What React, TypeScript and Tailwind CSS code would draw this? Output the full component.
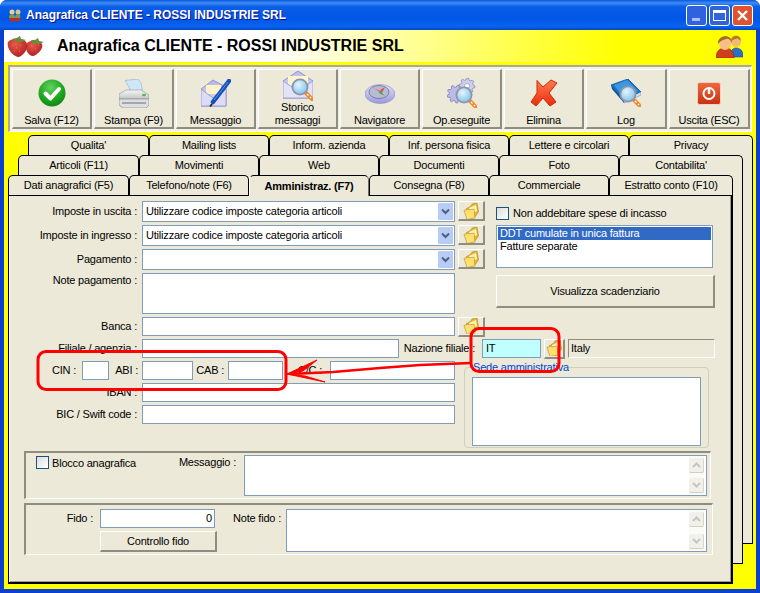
import type { ReactNode } from 'react'

const ROW_3 = ["Qualita'", 'Mailing lists', 'Inform. azienda', 'Inf. persona fisica', 'Lettere e circolari', 'Privacy']
const ROW_2 = ['Articoli (F11)', 'Movimenti', 'Web', 'Documenti', 'Foto', "Contabilita'"]
const ROW_1 = ['Dati anagrafici (F5)', 'Telefono/note (F6)', 'Amministraz. (F7)', 'Consegna (F8)', 'Commerciale', 'Estratto conto (F10)']

function Magnifier({ x = 0, y = 0, id }: { x?: number; y?: number; id: string }) {
  return (
    <g transform={`translate(${x} ${y})`}>
      <defs>
        <radialGradient id={id} cx="0.4" cy="0.35" r="0.7">
          <stop offset="0" stopColor="#e4f6ff" />
          <stop offset="1" stopColor="#7cc0ea" />
        </radialGradient>
      </defs>
      <path d="M19 19l7 7" stroke="#f08a30" strokeWidth="4" strokeLinecap="round" />
      <path d="M21 21l1.500 1.500M24 24l1 1" stroke="#fff" strokeWidth="1.200" />
      <circle cx="14" cy="14" r="7.600" fill={`url(#${id})`} stroke="#8d96a8" strokeWidth="1.800" />
    </g>
  )
}

function gearPath(cx: number, cy: number, r: number, teeth: number) {
  const pts: string[] = []
  for (let i = 0; i < teeth * 4; i++) {
    const a = (i / (teeth * 4)) * Math.PI * 2
    const rad = i % 4 < 2 ? r : r * 0.76
    pts.push(`${(cx + Math.cos(a) * rad).toFixed(1)} ${(cy + Math.sin(a) * rad).toFixed(1)}`)
  }
  return `M${pts.join('L')}Z`
}

function CheckIcon() {
  return (
    <svg width="28" height="28" viewBox="0 0 28 28">
      <defs>
        <radialGradient id="chk" cx="0.45" cy="0.3" r="0.8">
          <stop offset="0" stopColor="#5fd35f" />
          <stop offset="0.6" stopColor="#1ca31c" />
          <stop offset="1" stopColor="#0b7a16" />
        </radialGradient>
      </defs>
      <circle cx="14" cy="14" r="13.500" fill="url(#chk)" />
      <path d="M7.500 14.500l5 5L21 10" fill="none" stroke="#fff" strokeWidth="4" strokeLinecap="round" strokeLinejoin="round" />
    </svg>
  )
}

function PrinterIcon() {
  return (
    <svg width="30" height="29" viewBox="0 0 30 29">
      <defs>
        <linearGradient id="prt" x1="0" y1="0" x2="0" y2="1">
          <stop offset="0" stopColor="#f6f6f6" />
          <stop offset="1" stopColor="#c2c5c8" />
        </linearGradient>
      </defs>
      <path d="M6 1.500L19 0l3 4 2 10H12L10 8z" fill="#cfe6fa" stroke="#9ab8d2" strokeWidth="0.700" />
      <path d="M0 15l7-4h15l8 5v4H0z" fill="url(#prt)" stroke="#9a9ea2" strokeWidth="0.700" />
      <path d="M0 20h30v6l-3 3H4l-4-3z" fill="#dcdedf" stroke="#8d9195" strokeWidth="0.700" />
      <path d="M3 24h24" stroke="#6f7377" strokeWidth="1.200" />
      <ellipse cx="25" cy="16" rx="2" ry="1.200" fill="#58b948" />
    </svg>
  )
}

function MailPenIcon() {
  return (
    <svg width="30" height="28" viewBox="0 0 30 28">
      <defs>
        <linearGradient id="mp" x1="0" y1="0" x2="0" y2="1">
          <stop offset="0" stopColor="#b4b6ea" />
          <stop offset="1" stopColor="#d9d9f6" />
        </linearGradient>
      </defs>
      <path d="M0 10L12 1l13 7v19H0z" fill="url(#mp)" stroke="#8586c6" strokeWidth="0.800" />
      <rect x="5" y="6" width="15" height="9" fill="#fff2c8" />
      <path d="M0 10l12 9 13-9v17H0z" fill="#dcdcf7" stroke="#8d8ecd" strokeWidth="0.800" />
      <path d="M28 2L12 23" stroke="#1450b8" strokeWidth="4.500" strokeLinecap="round" />
      <path d="M27 3L13 21" stroke="#5b95e8" strokeWidth="1" />
      <path d="M11 25l-2 2.500" stroke="#25282e" strokeWidth="2" />
    </svg>
  )
}

function MailSearchIcon() {
  return (
    <svg width="30" height="30" viewBox="0 0 30 30">
      <defs>
        <linearGradient id="ms" x1="0" y1="0" x2="0" y2="1">
          <stop offset="0" stopColor="#b8baec" />
          <stop offset="1" stopColor="#e2e2f9" />
        </linearGradient>
      </defs>
      <path d="M0 10L15 0l15 10v17H0z" fill="url(#ms)" stroke="#8586c6" strokeWidth="0.800" />
      <rect x="5" y="5" width="20" height="10" fill="#fff4d2" />
      <path d="M0 10l15 10 15-10v17H0z" fill="#e2e2f8" stroke="#9091cf" strokeWidth="0.800" />
      <Magnifier x={3} y={2} id="ms-lens" />
    </svg>
  )
}

function CompassIcon() {
  return (
    <svg width="30" height="21" viewBox="0 0 30 21">
      <defs>
        <linearGradient id="cp" x1="0" y1="0" x2="0" y2="1">
          <stop offset="0" stopColor="#e0e0f8" />
          <stop offset="1" stopColor="#9a9adc" />
        </linearGradient>
      </defs>
      <ellipse cx="15" cy="11" rx="15" ry="9.500" fill="url(#cp)" stroke="#8a8ac8" strokeWidth="0.600" />
      <ellipse cx="14" cy="9" rx="10" ry="6.500" fill="#b8bcd2" stroke="#6a6fa0" strokeWidth="0.800" />
      <path d="M8 5l7 3 2 2z" fill="#e23a2a" />
      <path d="M15 8l5 5-6-3z" fill="#3aa548" />
      <path d="M15 7l5-3-3 6z" fill="#d8584a" />
    </svg>
  )
}

function GearsIcon() {
  return (
    <svg width="30" height="30" viewBox="0 0 30 30">
      <path d={gearPath(20, 8, 8, 8)} fill="#cfcfec" stroke="#8586be" strokeWidth="0.800" />
      <circle cx="20" cy="8" r="2.500" fill="#fff" stroke="#8586be" strokeWidth="0.600" />
      <path d={gearPath(9, 16, 9, 9)} fill="#bcbce6" stroke="#7b7cb8" strokeWidth="0.800" />
      <Magnifier x={3} y={3} id="gear-lens" />
    </svg>
  )
}

function DeleteIcon() {
  return (
    <svg width="28" height="28" viewBox="0 0 28 28">
      <defs>
        <linearGradient id="del" x1="0" y1="0" x2="0" y2="1">
          <stop offset="0" stopColor="#ff7a50" />
          <stop offset="1" stopColor="#ec2c0c" />
        </linearGradient>
      </defs>
      <path
        d="M7 1.500l6 6.500 8-7 6 3-8 10 7 9-6 4-7-8-7 8-5-4 6-9z"
        fill="url(#del)"
        stroke="#c92a0a"
        strokeWidth="1"
        strokeLinejoin="round"
      />
    </svg>
  )
}

function BookIcon() {
  return (
    <svg width="30" height="28" viewBox="0 0 30 28">
      <path d="M0 6l17-6 13 13-17 8z" fill="#1c76c8" stroke="#0d4e98" strokeWidth="0.800" />
      <path d="M3 6l13-5 11 11-14 7z" fill="#3d96e0" />
      <path d="M0 6l13 15v3L1 10z" fill="#0e56a4" />
      <path d="M13 21l17-8v3l-17 8z" fill="#d8e4f0" stroke="#5b7ca0" strokeWidth="0.500" />
      <Magnifier x={3} y={1} id="book-lens" />
    </svg>
  )
}

function PowerIcon() {
  return (
    <svg width="24" height="23" viewBox="0 0 24 23">
      <defs>
        <linearGradient id="pw" x1="0" y1="0" x2="0" y2="1">
          <stop offset="0" stopColor="#ef6a40" />
          <stop offset="1" stopColor="#ca2f10" />
        </linearGradient>
      </defs>
      <rect x="0.500" y="0.500" width="23" height="22" rx="2" fill="url(#pw)" stroke="#f3d0c0" />
      <circle cx="12" cy="11.500" r="5.500" fill="none" stroke="#fff" strokeWidth="2" />
      <path d="M12 7v5" stroke="#fff" strokeWidth="2.400" />
    </svg>
  )
}

function Strawberries() {
  return (
    <svg width="37" height="21" viewBox="0 0 37 21">
      <defs>
        <radialGradient id="bry" cx="0.4" cy="0.3" r="0.8">
          <stop offset="0" stopColor="#e8584a" />
          <stop offset="1" stopColor="#a81c1c" />
        </radialGradient>
      </defs>
      <path d="M20 7c3-3 12-3 15 1 2 5-5 11-9 12-5 0-9-8-6-13z" fill="url(#bry)" />
      <path d="M1 6c3-4 14-5 18 0 4 5-2 13-7 15-6 0-13-9-11-15z" fill="url(#bry)" />
      <path d="M5 3l5-1 3-2 1 3 5 1-5 2-5 0z" fill="#6f8a3a" />
      <path d="M24 4l4 0 3-2 1 3 5 1-5 2-6 0z" fill="#6f8a3a" />
      <path d="M5 9h.5M9 12h.5M13 9h.5M7 15h.5M12 15h.5M24 10h.5M28 13h.5M31 9h.5" stroke="#f4b0a0" strokeWidth="1" />
    </svg>
  )
}

function UsersIcon() {
  return (
    <svg width="27" height="23" viewBox="0 0 27 23">
      <path d="M14 22c0-5 2-9 6-9s7 3 7 7v2z" fill="#2a70c8" stroke="#144a90" strokeWidth="0.600" />
      <circle cx="20" cy="7" r="5" fill="#f6b878" />
      <path d="M15 6c0-7 10-7 10 0-2-2-4-3-5-2-2 0-3 1-5 2z" fill="#b47a20" />
      <path d="M0 23c0-6 3-10 9-10s9 4 9 10z" fill="#d0401c" stroke="#8c2410" strokeWidth="0.600" />
      <ellipse cx="9" cy="8" rx="6" ry="7" fill="#f8c088" />
      <path d="M2 9C1 0 16-2 16 8c-2-4-4-5-6-4-3 1-6 2-8 5z" fill="#a86c18" />
    </svg>
  )
}

function TitleIcon() {
  return (
    <svg width="13" height="13" viewBox="0 0 13 13">
      <path d="M1 9l5-1 1 4-4 1zM7 9l5-1 1 3-5 2z" fill="#c82820" />
      <circle cx="4" cy="3" r="2.500" fill="#e8d098" />
      <circle cx="10" cy="3" r="2.500" fill="#d8c888" />
      <path d="M1 9c0-3 1-4 3-4s3 1 3 4zM7 9c0-3 1-4 3-4s3 1 2 4z" fill="#7a9a50" />
    </svg>
  )
}

function FolderIcon() {
  return (
    <svg width="16" height="16" viewBox="0 0 16 16">
      <path d="M3 6l5-3 1-2 5-1 1.500 9-4 5.500z" fill="#e8b830" stroke="#a8821c" strokeWidth="0.600" />
      <path d="M6 5l7-3 1 6-6 3z" fill="#fff3b4" />
      <path d="M1 7.500l4-1.500 1 1 5-1 1 9-8 1.500z" fill="#ffe070" stroke="#b08a20" strokeWidth="0.600" />
    </svg>
  )
}

function ToolButton({ icon, label, tall, wide }: { icon: ReactNode; label: string[]; tall?: boolean; wide?: boolean }) {
  return (
    <div
      className={`flex h-[60px] flex-col items-center border-t border-l border-t-white border-l-white border-r-2 border-b-2 border-r-[#8f8d80] border-b-[#8f8d80] bg-[#ece9d8] ${wide ? 'w-[81px]' : 'w-[80px]'}`}
    >
      <div className={`flex items-center justify-center ${tall ? 'h-[31px] pt-[1px]' : 'h-[44px] pt-[2px]'}`}>{icon}</div>
      <div className="text-center leading-[13px]">
        {label.map((l) => (
          <div key={l}>{l}</div>
        ))}
      </div>
    </div>
  )
}

function TabRow({ tabs, offset, active }: { tabs: string[]; offset: string; active?: number }) {
  return (
    <div className={`flex h-[20px] ${offset}`}>
      {tabs.map((t, i) => (
        <div
          key={t}
          className={`flex items-center justify-center rounded-t-[5px] border-t border-l border-r border-black ${i === 0 ? 'w-[121px]' : i === 5 ? 'w-[124px]' : 'w-[120px]'} ${active === i ? 'relative z-10 h-[21px] border-l-white border-r-[#716f64] bg-[#ece9d8] font-bold' : 'bg-[#ece9d8]'}`}
        >
          {t}
        </div>
      ))}
    </div>
  )
}

function Label({ w, children, top, pad }: { w: string; children: ReactNode; top?: boolean; pad?: string }) {
  return <div className={`shrink-0 text-right ${w} ${top ? `self-start ${pad ?? 'pt-[1px]'}` : ''}`}>{children}</div>
}

function Box({ className, children, bg = 'bg-white' }: { className: string; children?: ReactNode; bg?: string }) {
  return <div className={`shrink-0 border border-[#7f9db9] ${bg} ${className}`}>{children}</div>
}

function FolderButton({ w = 'w-[27px]' }: { w?: string }) {
  return (
    <div className={`flex h-[20px] shrink-0 items-center justify-center border-t border-l border-t-white border-l-white border-r-2 border-b-2 border-r-[#8f8d80] border-b-[#8f8d80] bg-[#ece9d8] ${w}`}>
      <FolderIcon />
    </div>
  )
}

function Combo({ text }: { text?: string }) {
  return (
    <Box className="flex h-[21px] w-[313px] items-center justify-between pl-[3px] pr-[1px]">
      <span>{text}</span>
      <span className="flex h-[17px] w-[15px] items-center justify-center rounded-[1px] bg-[#b9ccf6]">
        <svg width="9" height="7" viewBox="0 0 9 7">
          <path d="M1 1.500l3.500 3.500L8 1.500" fill="none" stroke="#4d6185" strokeWidth="2" />
        </svg>
      </span>
    </Box>
  )
}

function Spinner({ gap }: { gap: string }) {
  const btn = 'flex h-[15px] w-[15px] items-center justify-center rounded-[2px] border-r border-b border-r-[#d8d6c6] border-b-[#d0cebc] bg-[#f1f0ea]'
  return (
    <div className={`flex w-[15px] flex-col justify-center bg-[#fafaf6] ${gap}`}>
      <div className={btn}>
        <svg width="9" height="6" viewBox="0 0 9 6">
          <path d="M1 5l3.500-3.500L8 5" fill="none" stroke="#c6c6c2" strokeWidth="2" />
        </svg>
      </div>
      <div className={btn}>
        <svg width="9" height="6" viewBox="0 0 9 6">
          <path d="M1 1l3.500 3.500L8 1" fill="none" stroke="#c6c6c2" strokeWidth="2" />
        </svg>
      </div>
    </div>
  )
}

function Checkbox() {
  return <div className="h-[13px] w-[13px] shrink-0 border border-[#1c5180] bg-gradient-to-br from-[#dcdcd7] to-white" />
}

function WinButton({ children, close }: { children: ReactNode; close?: boolean }) {
  return (
    <div className={`flex h-[21px] w-[21px] items-center justify-center rounded-[3px] border border-white ${close ? 'bg-[#e0532f]' : 'bg-[#2f62dc]'}`}>
      {children}
    </div>
  )
}

export default function App() {
  return (
    <div className="relative flex h-[593px] w-[760px] flex-col overflow-hidden rounded-t-[7px] bg-[#0a3fd0] text-[11px] leading-[13px] tracking-[-0.2px] text-black [font-family:'Liberation_Sans',sans-serif]">
      {/* Title bar */}
      <div className="flex h-[30px] shrink-0 items-center bg-[linear-gradient(180deg,#0a58e0_0%,#3f8cf3_10%,#0a5ee8_22%,#0055e5_60%,#0a62ee_88%,#0048c8_100%)] pl-[8px] pr-[7px]">
        <TitleIcon />
        <div className="ml-[5px] flex-1 text-[12px] font-bold tracking-normal text-white [text-shadow:1px_1px_#0f1089]">
          Anagrafica CLIENTE - ROSSI INDUSTRIE SRL
        </div>
        <div className="flex gap-[2px]">
          <WinButton>
            <span className="mt-[9px] -ml-[2px] h-[3px] w-[8px] bg-[#a8c0f0]" />
          </WinButton>
          <WinButton>
            <span className="h-[11px] w-[13px] border border-t-[3px] border-white" />
          </WinButton>
          <WinButton close>
            <svg width="13" height="13" viewBox="0 0 13 13">
              <path d="M2 2l9 9M11 2l-9 9" stroke="#fff" strokeWidth="2.400" />
            </svg>
          </WinButton>
        </div>
      </div>

      {/* Yellow client area */}
      <div className="relative mx-[4px] mb-[4px] flex-1 bg-[#ffff00]">
        <div className="flex h-[32px] items-center bg-[linear-gradient(90deg,#ffffff_0%,#ffffff_35%,#ffff00_82%)] pl-[3px] pr-[13px]">
          <Strawberries />
          <div className="ml-[13px] flex-1 text-[16px] font-bold leading-[20px] tracking-normal">
            Anagrafica CLIENTE - ROSSI INDUSTRIE SRL
          </div>
          <UsersIcon />
        </div>

        {/* Toolbar */}
        <div className="mx-[4px] mt-[3px] flex h-[67px] gap-[2px] border-t-2 border-l-2 border-t-[#aca899] border-l-[#aca899] border-r border-b border-r-white border-b-white bg-[#f4f2e8] pt-[2px] pl-[2px]">
          <ToolButton icon={<CheckIcon />} label={['Salva (F12)']} />
          <ToolButton icon={<PrinterIcon />} label={['Stampa (F9)']} />
          <ToolButton icon={<MailPenIcon />} label={['Messaggio']} />
          <ToolButton tall icon={<MailSearchIcon />} label={['Storico', 'messaggi']} />
          <ToolButton icon={<CompassIcon />} label={['Navigatore']} />
          <ToolButton icon={<GearsIcon />} label={['Op.eseguite']} />
          <ToolButton icon={<DeleteIcon />} label={['Elimina']} />
          <ToolButton wide icon={<BookIcon />} label={['Log']} />
          <ToolButton wide icon={<PowerIcon />} label={['Uscita (ESC)']} />
        </div>

        {/* Tab pages stacked behind the active one */}
        <div className="absolute left-[24px] top-[125px] h-[389px] w-[725px] border-r border-b border-black bg-[#ece9d8]" />
        <div className="absolute left-[14px] top-[145px] h-[389px] w-[725px] border-r border-b border-black bg-[#ece9d8]" />

        <div className="relative mt-[3px]">
          <TabRow tabs={ROW_3} offset="ml-[24px]" />
          <TabRow tabs={ROW_2} offset="ml-[14px]" />
          <TabRow tabs={ROW_1} offset="ml-[4px]" active={2} />

          {/* Active page */}
          <div className="ml-[4px] h-[389px] w-[725px] border border-black border-b-2 border-r-2 border-b-black border-r-black bg-[#ece9d8] pt-[5px] shadow-[inset_1px_0_#fff,inset_-1px_-1px_#9d9b8c]">
            <div className="pl-[1px]">
              <div className="flex">
                <div className="flex w-[475px] flex-col gap-[3px]">
                  <div className="flex items-center gap-[5px]">
                    <Label w="w-[127px]">Imposte in uscita :</Label>
                    <Combo text="Utilizzare codice imposte categoria articoli" />
                    <div className="-ml-[2px] self-start"><FolderButton /></div>
                  </div>
                  <div className="flex items-center gap-[5px]">
                    <Label w="w-[127px]">Imposte in ingresso :</Label>
                    <Combo text="Utilizzare codice imposte categoria articoli" />
                    <div className="-ml-[2px] self-start"><FolderButton /></div>
                  </div>
                  <div className="flex items-center gap-[5px]">
                    <Label w="w-[127px]">Pagamento :</Label>
                    <Combo />
                    <div className="-ml-[2px] self-start"><FolderButton /></div>
                  </div>
                  <div className="flex items-center gap-[5px]">
                    <Label w="w-[127px]" top>Note pagamento :</Label>
                    <Box className="h-[41px] w-[313px]" />
                  </div>
                  <div className="flex h-[19px] items-center gap-[5px]">
                    <Label w="w-[127px]">Banca :</Label>
                    <Box className="h-[19px] w-[313px]" />
                    <div className="-ml-[2px]"><FolderButton /></div>
                  </div>
                </div>
                <div className="ml-[11px] flex w-[219px] flex-col">
                  <div className="mt-[6px] flex items-center gap-[4px]">
                    <Checkbox />
                    <span>Non addebitare spese di incasso</span>
                  </div>
                  <Box className="mt-[5px] h-[43px] w-[217px] p-[1px]">
                    <div className="bg-[#316ac5] pl-[2px] text-white">DDT cumulate in unica fattura</div>
                    <div className="pl-[2px]">Fatture separate</div>
                  </Box>
                  <div className="mt-[7px] flex h-[33px] items-center justify-center border-t border-l border-t-white border-l-white border-r-2 border-b-2 border-r-[#8f8d80] border-b-[#8f8d80]">
                    Visualizza scadenziario
                  </div>
                </div>
              </div>

              <div className="mt-[3px] flex h-[19px] items-center">
                <Label w="w-[127px]">Filiale / agenzia :</Label>
                <Box className="ml-[5px] h-[19px] w-[257px]" />
                <Label w="w-[76px]">Nazione filiale :</Label>
                <Box bg="bg-[#bfffff]" className="ml-[7px] flex h-[19px] w-[59px] items-center pl-[3px]">IT</Box>
                <div className="ml-[3px]"><FolderButton w="w-[21px]" /></div>
                <div className="ml-[3px] flex h-[19px] w-[147px] items-center border-t border-l border-t-[#8f8d80] border-l-[#8f8d80] border-r border-b border-r-white border-b-white pl-[2px]">
                  Italy
                </div>
              </div>

              <div className="mt-[3px] flex">
                <div className="flex w-[445px] flex-col gap-[3px]">
                  <div className="flex h-[19px] items-center">
                    <Label w="w-[66px]">CIN :</Label>
                    <Box className="ml-[6px] h-[19px] w-[27px]" />
                    <Label w="w-[29px]">ABI :</Label>
                    <Box className="ml-[4px] h-[19px] w-[51px]" />
                    <Label w="w-[31px]">CAB :</Label>
                    <Box className="ml-[4px] h-[19px] w-[55px]" />
                    <Label w="w-[39px]">C/C :</Label>
                    <Box className="ml-[8px] h-[19px] w-[125px]" />
                  </div>
                  <div className="flex h-[19px] items-center gap-[5px]">
                    <Label w="w-[127px]">IBAN :</Label>
                    <Box className="h-[19px] w-[313px]" />
                  </div>
                  <div className="flex h-[19px] items-center gap-[5px]">
                    <Label w="w-[127px]">BIC / Swift code :</Label>
                    <Box className="h-[19px] w-[313px]" />
                  </div>
                </div>
                <div className="relative ml-[9px] mt-[6px] h-[81px] w-[245px] rounded-[4px] border border-[#d0d0bf] pl-[7px] pt-[9px]">
                  <span className="absolute -top-[7px] left-[8px] bg-[#ece9d8] text-[#0046d5]">Sede amministrativa</span>
                  <Box className="h-[69px] w-[229px]" />
                </div>
              </div>

              <div className="ml-[14px] mt-[3px] flex h-[48px] w-[687px] border-t-2 border-l-2 border-t-[#8f8d80] border-l-[#8f8d80] border-r border-b border-r-white border-b-white pl-[10px] pt-[2px]">
                <div className="mt-[1px] flex w-[110px] gap-[3px] self-start">
                  <Checkbox />
                  <span className="pt-[1px]">Blocco anagrafica</span>
                </div>
                <Label w="w-[90px]" top>Messaggio :</Label>
                <Box className="ml-[8px] flex h-[41px] w-[463px] justify-end pr-[2px]">
                  <Spinner gap="gap-[5px]" />
                </Box>
              </div>

              <div className="ml-[14px] mt-[4px] flex h-[52px] w-[689px] border-t-2 border-l-2 border-t-[#8f8d80] border-l-[#8f8d80] border-r border-b border-r-white border-b-white pt-[4px]">
                <Label w="w-[67px]" top pad="pt-[3px]">Fido :</Label>
                <div className="ml-[7px] w-[117px]">
                  <Box className="flex h-[19px] w-[115px] items-center justify-end pr-[2px]">0</Box>
                  <div className="mt-[3px] flex h-[21px] items-center justify-center border-t border-l border-t-white border-l-white border-r-2 border-b-2 border-r-[#8f8d80] border-b-[#8f8d80]">
                    Controllo fido
                  </div>
                </div>
                <Label w="w-[64px]" top pad="pt-[3px]">Note fido :</Label>
                <Box className="ml-[5px] flex h-[43px] w-[421px] justify-end pr-[2px]">
                  <Spinner gap="gap-[7px]" />
                </Box>
              </div>
            </div>
          </div>
        </div>
      </div>

      {/* Red marks drawn on top of the screenshot */}
      <svg className="pointer-events-none absolute left-0 top-0 z-20" width="760" height="593" viewBox="0 0 760 593" fill="none" stroke="#ff0000" strokeWidth="3">
        <rect x="38" y="351.500" width="248" height="38" rx="8" />
        <rect x="471" y="328.500" width="88" height="43" rx="8" />
        <path d="M471 363l-51 2-40 3-47 4-43 2" strokeWidth="2.500" />
        <path d="M287 374l30-14-14 11zM287 374l38 8-20-6z" fill="#ff0000" strokeWidth="1" />
      </svg>
    </div>
  )
}
